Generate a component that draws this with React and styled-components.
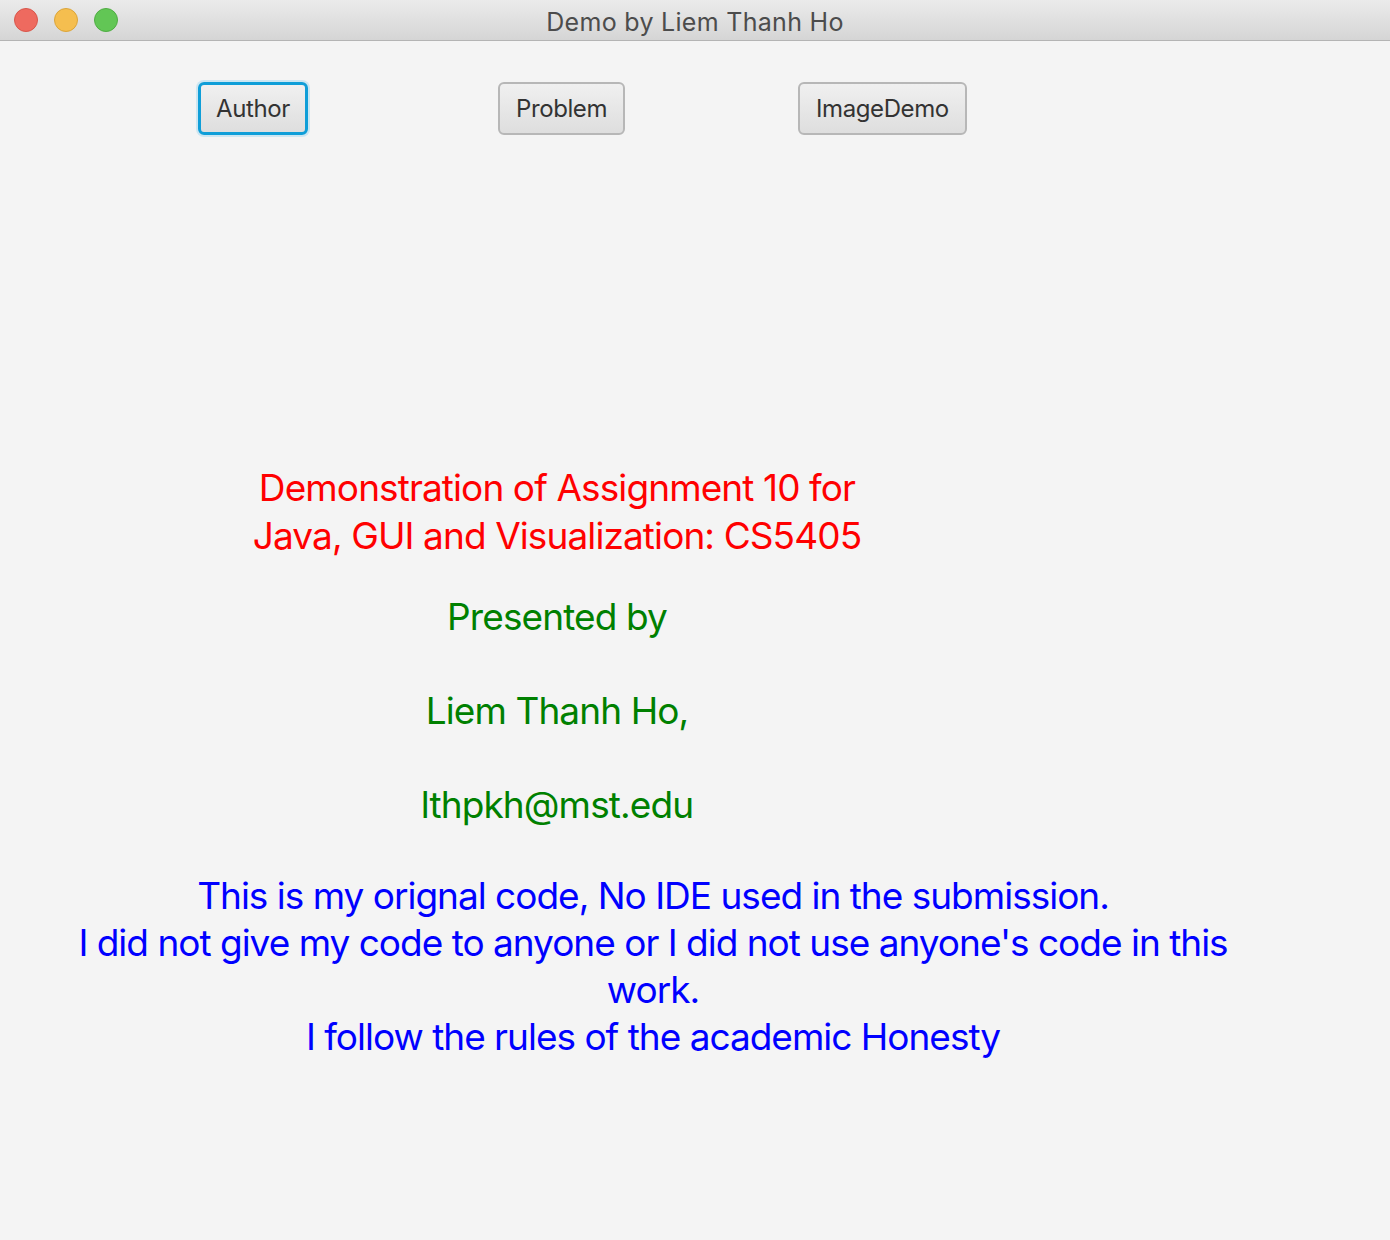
import React from 'react';
import styled, { createGlobalStyle } from 'styled-components';

const GlobalStyle = createGlobalStyle`
  html, body {
    margin: 0;
    padding: 0;
    background: #f4f4f4;
  }
  body {
    font-family: Inter, "Noto Sans", "Liberation Sans", sans-serif;
  }
`;

const Window = styled.div`
  width: 1390px;
  min-height: 1240px;
  background: #f4f4f4;
  display: flex;
  flex-direction: column;
`;

const TitleBar = styled.div`
  height: 41px;
  box-sizing: border-box;
  display: flex;
  align-items: center;
  padding-left: 14px;
  background: linear-gradient(#ebebeb, #d5d5d5);
  border-bottom: 1px solid #b4b4b4;
  position: relative;
`;

const Lights = styled.div`
  display: flex;
  gap: 16px;
`;

const Light = styled.span`
  width: 24px;
  height: 24px;
  border-radius: 50%;
  box-sizing: border-box;
  background: ${(p) => p.fill};
  border: 1px solid ${(p) => p.edge};
`;

const Title = styled.div`
  position: absolute;
  left: 0;
  right: 0;
  top: 7px;
  text-align: center;
  font-size: 25px;
  color: #4c4c4c;
  letter-spacing: 0.3px;
`;

const ButtonRow = styled.div`
  display: grid;
  grid-template-columns: repeat(3, 300px);
  padding: 41px 0 0 198px;
  align-items: start;
`;

const Button = styled.button`
  justify-self: start;
  height: 53px;
  padding: 0 ${(p) => (p.focused ? 15 : 16)}px;
  font-family: Inter, "Noto Sans", sans-serif;
  font-size: 24px;
  letter-spacing: -0.4px;
  color: #333;
  border-radius: 6px;
  background: linear-gradient(#f0f0f0, #dedede);
  border: ${(p) => (p.focused ? '3px solid #0f9ed8' : '2px solid #b7b7b7')};
  box-shadow: ${(p) => (p.focused ? '0 0 0 2px #cbe6f2' : 'none')};
  cursor: pointer;
`;

const Block = styled.div`
  width: ${(p) => p.width}px;
  margin-left: ${(p) => p.left}px;
  margin-top: ${(p) => p.top}px;
  text-align: center;
  font-size: 37px;
  line-height: ${(p) => p.lh || 47}px;
  letter-spacing: ${(p) => p.ls || -0.9}px;
  color: ${(p) => p.color};
`;

const Line = styled.div`
  min-height: ${(p) => p.lh || 47}px;
`;

export default function App() {
  return (
    <>
      <GlobalStyle />
      <Window>
        <TitleBar>
          <Lights>
            <Light fill="#ee6a5f" edge="#d8564b" />
            <Light fill="#f5be4f" edge="#dba53a" />
            <Light fill="#62c655" edge="#4fad43" />
          </Lights>
          <Title>Demo by Liem Thanh Ho</Title>
        </TitleBar>

        <ButtonRow>
          <Button focused>Author</Button>
          <Button>Problem</Button>
          <Button>ImageDemo</Button>
        </ButtonRow>

        <Block color="#ff0000" width={1114} left={0} top={329} lh={48}>
          <Line lh={48}>Demonstration of Assignment 10 for</Line>
          <Line lh={48}>Java, GUI and Visualization: CS5405</Line>
        </Block>

        <Block color="#008000" width={1114} left={0} top={33}>
          <Line>Presented by</Line>
          <Line />
          <Line>Liem Thanh Ho,</Line>
          <Line />
          <Line>lthpkh@mst.edu</Line>
        </Block>

        <Block color="#0000ff" width={1160} left={73} top={44} ls={-1}>
          This is my orignal code, No IDE used in the submission.
          <br />
          I did not give my code to anyone or I did not use anyone's code in this work.
          <br />
          I follow the rules of the academic Honesty
        </Block>
      </Window>
    </>
  );
}
